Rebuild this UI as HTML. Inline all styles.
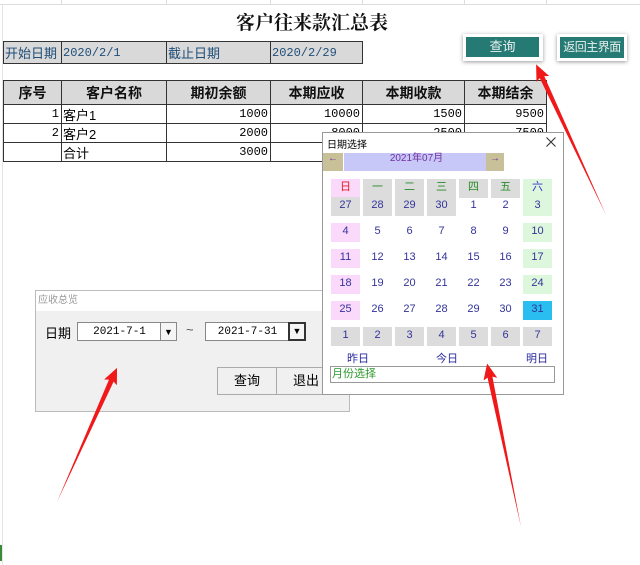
<!DOCTYPE html>
<html><head><meta charset="utf-8"><style>
*{margin:0;padding:0;box-sizing:border-box}
body{width:640px;height:565px;background:#fff;position:relative;overflow:hidden;font-family:"Liberation Sans","Noto Sans CJK SC",sans-serif;font-size:13px}
.a{position:absolute}
.c{position:absolute;border:1px solid #333;display:flex;align-items:center;white-space:nowrap;overflow:hidden}
.h{background:#d9d9d9;justify-content:center;font-weight:bold;font-size:14px;color:#111}
.r{justify-content:flex-end;padding-right:2px;font-family:"Liberation Mono","Noto Sans CJK SC",monospace;font-size:12px}
.d{background:#d9d9d9;color:#1f4e79;font-size:13px;padding-left:1px}
.dm{font-family:"Liberation Mono",monospace;font-size:12px}
.cell{position:absolute;width:29px;height:19px;text-align:center;font-size:11px;line-height:17px;color:#33339a}
.g{background:#dcdcdc}.p{background:#fbd9fb}.gr{background:#dcf7dc}
</style></head><body>
<div class="a" style="left:0;top:4px;width:640px;border-top:1px solid #ddd"></div>
<div class="a" style="left:61px;top:0;height:4px;border-left:1px solid #ddd"></div>
<div class="a" style="left:166px;top:0;height:4px;border-left:1px solid #ddd"></div>
<div class="a" style="left:270px;top:0;height:4px;border-left:1px solid #ddd"></div>
<div class="a" style="left:362px;top:0;height:4px;border-left:1px solid #ddd"></div>
<div class="a" style="left:464px;top:0;height:4px;border-left:1px solid #ddd"></div>
<div class="a" style="left:546px;top:0;height:4px;border-left:1px solid #ddd"></div>
<div class="a" style="left:2px;top:4px;height:561px;border-left:1px solid #e4e4e4"></div>
<div class="a" style="left:0;top:545px;width:2px;height:16px;background:#3a8a3a"></div>
<div class="a" style="left:236px;top:8px;font-family:'Noto Serif CJK SC',serif;font-size:19px;font-weight:bold;color:#111">客户往来款汇总表</div>

<div class="c d" style="left:3px;top:41px;width:59px;height:23px">开始日期</div>
<div class="c d dm" style="left:61px;top:41px;width:106px;height:23px">2020/2/1</div>
<div class="c d" style="left:166px;top:41px;width:105px;height:23px">截止日期</div>
<div class="c d dm" style="left:270px;top:41px;width:93px;height:23px">2020/2/29</div>

<div class="a" style="left:463px;top:34px;width:80px;height:27px;background:#fff;box-shadow:0 1px 4px #999"></div>
<div class="a" style="left:466px;top:37px;width:73px;height:20px;background:#267a74;color:#e8f0f0;text-align:center;line-height:20px">查询</div>
<div class="a" style="left:557px;top:34px;width:70px;height:27px;background:#fff;box-shadow:0 1px 4px #999"></div>
<div class="a" style="left:560px;top:37px;width:64px;height:21px;background:#267a74;color:#e8f0f0;text-align:center;line-height:20px;font-size:12px;white-space:nowrap;letter-spacing:-0.5px">返回主界面</div>

<div class="c h" style="left:3px;top:80px;width:59px;height:25px">序号</div>
<div class="c h" style="left:61px;top:80px;width:106px;height:25px">客户名称</div>
<div class="c h" style="left:166px;top:80px;width:105px;height:25px">期初余额</div>
<div class="c h" style="left:270px;top:80px;width:93px;height:25px">本期应收</div>
<div class="c h" style="left:362px;top:80px;width:103px;height:25px">本期收款</div>
<div class="c h" style="left:464px;top:80px;width:83px;height:25px">本期结余</div>

<div class="c r" style="left:3px;top:104px;width:59px;height:20px">1</div>
<div class="c" style="left:61px;top:104px;width:106px;height:20px;padding-left:1px">客户1</div>
<div class="c r" style="left:166px;top:104px;width:105px;height:20px">1000</div>
<div class="c r" style="left:270px;top:104px;width:93px;height:20px">10000</div>
<div class="c r" style="left:362px;top:104px;width:103px;height:20px">1500</div>
<div class="c r" style="left:464px;top:104px;width:83px;height:20px">9500</div>
<div class="c r" style="left:3px;top:123px;width:59px;height:20px">2</div>
<div class="c" style="left:61px;top:123px;width:106px;height:20px;padding-left:1px">客户2</div>
<div class="c r" style="left:166px;top:123px;width:105px;height:20px">2000</div>
<div class="c r" style="left:270px;top:123px;width:93px;height:20px">8000</div>
<div class="c r" style="left:362px;top:123px;width:103px;height:20px">2500</div>
<div class="c r" style="left:464px;top:123px;width:83px;height:20px">7500</div>
<div class="c r" style="left:3px;top:142px;width:59px;height:20px"></div>
<div class="c" style="left:61px;top:142px;width:106px;height:20px;padding-left:1px">合计</div>
<div class="c r" style="left:166px;top:142px;width:105px;height:20px">3000</div>
<div class="c r" style="left:270px;top:142px;width:93px;height:20px"></div>

<div class="a" style="left:35px;top:290px;width:315px;height:122px;background:#f0f0f0;border:1px solid #bbb">
 <div style="height:20px;background:#fff;color:#999;font-size:10px;line-height:20px;padding-left:2px">应收总览</div>
 <div class="a" style="left:9px;top:32px;font-size:13px">日期</div>
 <div class="a" style="left:41px;top:31px;width:84px;height:19px;background:#fff;border:1px solid #888;border-right:none;font-family:'Liberation Mono',monospace;font-size:11px;text-align:center;line-height:18px">2021-7-1</div>
 <div class="a" style="left:124px;top:31px;width:17px;height:19px;background:#f5f5f5;border:1px solid #888;font-size:9px;text-align:center;line-height:18px">▼</div>
 <div class="a" style="left:150px;top:31px;font-size:13px;color:#555">~</div>
 <div class="a" style="left:169px;top:31px;width:84px;height:19px;background:#fff;border:1px solid #888;border-right:none;font-family:'Liberation Mono',monospace;font-size:11px;text-align:center;line-height:18px">2021-7-31</div>
 <div class="a" style="left:252px;top:31px;width:18px;height:19px;background:#f5f5f5;border:2px solid #333;font-size:9px;text-align:center;line-height:15px">▼</div>
 <div class="a" style="left:181px;top:76px;width:60px;height:28px;background:#f0f0f0;border:1px solid #aaa;text-align:center;line-height:26px">查询</div>
 <div class="a" style="left:240px;top:76px;width:60px;height:28px;background:#f0f0f0;border:1px solid #aaa;padding-left:16px;line-height:26px">退出</div>
</div>

<div class="a" style="left:322px;top:132px;width:242px;height:263px;background:#fff;border:1px solid #999">
 <div class="a" style="left:4px;top:3px;font-size:10px">日期选择</div>
 <svg class="a" style="left:223px;top:4px" width="10" height="10"><path d="M0.5 0.5L9.5 9.5M9.5 0.5L0.5 9.5" stroke="#333" stroke-width="1.1"/></svg>
 <div class="a" style="left:0;top:20px;width:20px;height:18px;background:#c8c098;color:#7030a0;font-size:10px;text-align:center;line-height:12px">←</div>
 <div class="a" style="left:21px;top:20px;width:145px;height:18px;background:#c8c8f8;color:#7030a0;font-size:10px;text-align:center;line-height:12px">2021年07月</div>
 <div class="a" style="left:163px;top:20px;width:18px;height:18px;background:#c8c098;color:#7030a0;font-size:10px;text-align:center;line-height:12px">→</div>
</div>
<div class="cell p" style="left:331px;top:179px;color:#e02020">日</div>
<div class="cell g" style="left:363px;top:179px;color:#2a8a2a">一</div>
<div class="cell g" style="left:395px;top:179px;color:#2a8a2a">二</div>
<div class="cell g" style="left:427px;top:179px;color:#2a8a2a">三</div>
<div class="cell g" style="left:459px;top:179px;color:#2a8a2a">四</div>
<div class="cell g" style="left:491px;top:179px;color:#2a8a2a">五</div>
<div class="cell gr" style="left:523px;top:179px;color:#3333cc">六</div>
<div class="cell g" style="left:331px;top:197px">27</div><div class="cell g" style="left:363px;top:197px">28</div><div class="cell g" style="left:395px;top:197px">29</div><div class="cell g" style="left:427px;top:197px">30</div><div class="cell" style="left:459px;top:197px">1</div><div class="cell" style="left:491px;top:197px">2</div><div class="cell gr" style="left:523px;top:197px">3</div>
<div class="cell p" style="left:331px;top:223px">4</div><div class="cell" style="left:363px;top:223px">5</div><div class="cell" style="left:395px;top:223px">6</div><div class="cell" style="left:427px;top:223px">7</div><div class="cell" style="left:459px;top:223px">8</div><div class="cell" style="left:491px;top:223px">9</div><div class="cell gr" style="left:523px;top:223px">10</div>
<div class="cell p" style="left:331px;top:249px">11</div><div class="cell" style="left:363px;top:249px">12</div><div class="cell" style="left:395px;top:249px">13</div><div class="cell" style="left:427px;top:249px">14</div><div class="cell" style="left:459px;top:249px">15</div><div class="cell" style="left:491px;top:249px">16</div><div class="cell gr" style="left:523px;top:249px">17</div>
<div class="cell p" style="left:331px;top:275px">18</div><div class="cell" style="left:363px;top:275px">19</div><div class="cell" style="left:395px;top:275px">20</div><div class="cell" style="left:427px;top:275px">21</div><div class="cell" style="left:459px;top:275px">22</div><div class="cell" style="left:491px;top:275px">23</div><div class="cell gr" style="left:523px;top:275px">24</div>
<div class="cell p" style="left:331px;top:301px">25</div><div class="cell" style="left:363px;top:301px">26</div><div class="cell" style="left:395px;top:301px">27</div><div class="cell" style="left:427px;top:301px">28</div><div class="cell" style="left:459px;top:301px">29</div><div class="cell" style="left:491px;top:301px">30</div><div class="cell" style="left:523px;top:301px;background:#29bdf0">31</div>
<div class="cell g" style="left:331px;top:327px">1</div><div class="cell g" style="left:363px;top:327px">2</div><div class="cell g" style="left:395px;top:327px">3</div><div class="cell g" style="left:427px;top:327px">4</div><div class="cell g" style="left:459px;top:327px">5</div><div class="cell g" style="left:491px;top:327px">6</div><div class="cell g" style="left:523px;top:327px">7</div>
<div class="a" style="left:347px;top:350px;font-size:11px;color:#2a2aa0">昨日</div>
<div class="a" style="left:436px;top:350px;font-size:11px;color:#2a2aa0">今日</div>
<div class="a" style="left:526px;top:350px;font-size:11px;color:#2a2aa0">明日</div>
<div class="a" style="left:330px;top:366px;width:225px;height:17px;border:1px solid #999;color:#2a9a2a;font-size:11px;line-height:14px;padding-left:1px">月份选择</div>

<svg class="a" style="left:0;top:0" width="640" height="565">
 <g fill="#f01818">
  <polygon transform="translate(57,502) rotate(-65.9)" points="0,0 133,-2.5 131,-7 147,0 131,7 133,2.5"/>
  <polygon transform="translate(521,527) rotate(-101.7)" points="0,0 153,-2.5 151,-7 167,0 151,7 153,2.5"/>
  <polygon transform="translate(606,215) rotate(-114.9)" points="0,0 152,-2.5 150,-7 166,0 150,7 152,2.5"/>
 </g>
</svg>
</body></html>
